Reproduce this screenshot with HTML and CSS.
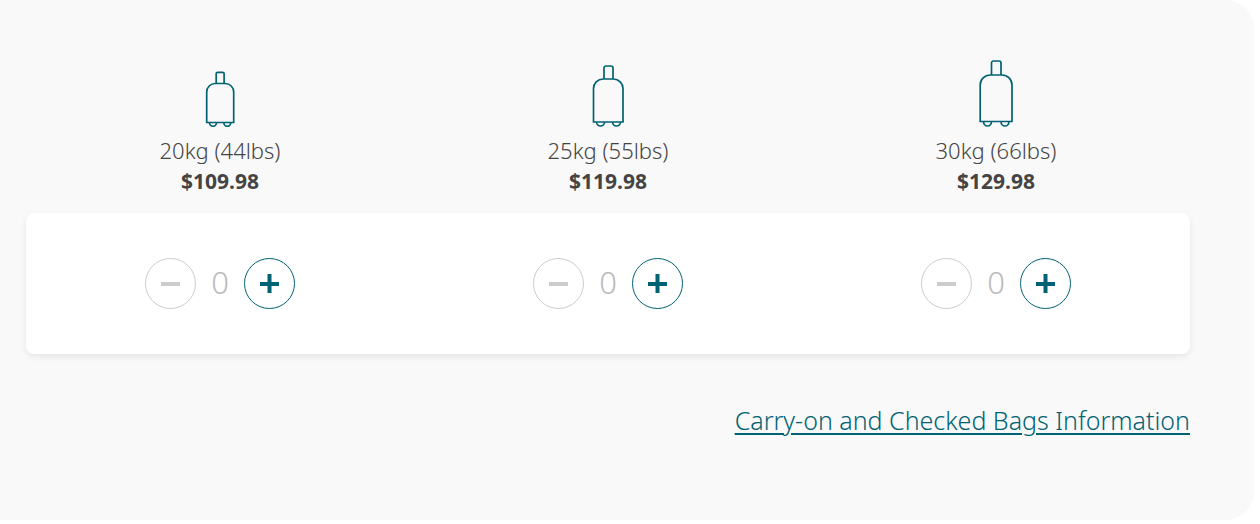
FILE: index.html
```html
<!DOCTYPE html>
<html lang="en">
<head>
    <meta charset="UTF-8">
    <meta name="viewport" content="width=device-width, initial-scale=1.0">
    <title>Checked Bags</title>
    <link rel="stylesheet" href="styles.css">
</head>
<body>

<main class="bags">
    <div class="options">
        <div class="option">
            <svg class="bag" width="30" height="56" viewBox="0 0 30 56" aria-hidden="true">
                <path d="M11.2 12.5V2.8a1.5 1.5 0 0 1 1.5-1.5h4.900a1.500 1.500 0 0 1 1.500 1.500v9.700M1.700 51.500V21a8.500 8.500 0 0 1 8.500-8.500h10a8.500 8.500 0 0 1 8.500 8.500v30.500z"/>
                <path d="M4.500 51.500a3.500 3.800 0 0 0 7 0M18.800 51.500a3.500 3.800 0 0 0 7 0"/>
            </svg>
            <span id="bag20" class="weight">20kg (44lbs)</span>
            <strong class="price">$109.98</strong>
        </div>
        <div class="option">
            <svg class="bag" width="32" height="62" viewBox="0 0 32 62" aria-hidden="true">
                <path d="M12 14V3a2 2 0 0 1 2-2h5a2 2 0 0 1 2 2v11M1.500 57V23.500a9.500 9.500 0 0 1 9.500-9.500h10.500a9.500 9.500 0 0 1 9.500 9.500V57z"/>
                <path d="M4.500 57a4 4 0 0 0 8 0M20.500 57a4 4 0 0 0 8 0"/>
            </svg>
            <span id="bag25" class="weight">25kg (55lbs)</span>
            <strong class="price">$119.98</strong>
        </div>
        <div class="option">
            <svg class="bag" width="34" height="67" viewBox="0 0 34 67" aria-hidden="true">
                <path d="M12.500 15V3a2 2 0 0 1 2-2h5.500a2 2 0 0 1 2 2v12M1.200 61.500V25a10 10 0 0 1 10-10h11.800a10 10 0 0 1 10 10v36.500z"/>
                <path d="M4.500 61.500a4 4.500 0 0 0 8 0M22 61.500a4 4.500 0 0 0 8 0"/>
            </svg>
            <span id="bag30" class="weight">30kg (66lbs)</span>
            <strong class="price">$129.98</strong>
        </div>
    </div>

    <div class="card">
        <div class="counter" role="group" aria-labelledby="bag20">
            <button class="minus" aria-label="Remove bag" disabled><svg width="19" height="19" viewBox="0 0 19 19"><path d="M0 10H19"/></svg></button>
            <span class="count">0</span>
            <button class="plus" aria-label="Add bag"><svg width="19" height="19" viewBox="0 0 19 19"><path d="M0 10H19M9.500 0V19"/></svg></button>
        </div>
        <div class="counter" role="group" aria-labelledby="bag25">
            <button class="minus" aria-label="Remove bag" disabled><svg width="19" height="19" viewBox="0 0 19 19"><path d="M0 10H19"/></svg></button>
            <span class="count">0</span>
            <button class="plus" aria-label="Add bag"><svg width="19" height="19" viewBox="0 0 19 19"><path d="M0 10H19M9.500 0V19"/></svg></button>
        </div>
        <div class="counter" role="group" aria-labelledby="bag30">
            <button class="minus" aria-label="Remove bag" disabled><svg width="19" height="19" viewBox="0 0 19 19"><path d="M0 10H19"/></svg></button>
            <span class="count">0</span>
            <button class="plus" aria-label="Add bag"><svg width="19" height="19" viewBox="0 0 19 19"><path d="M0 10H19M9.500 0V19"/></svg></button>
        </div>
    </div>

    <a href="#" class="info">Carry-on and Checked Bags Information</a>
</main>

<script>
    document.querySelectorAll('.counter').forEach(function (counter) {
        const minus = counter.querySelector('.minus');
        const plus = counter.querySelector('.plus');
        const count = counter.querySelector('.count');

        function change(amount) {
            const value = Number(count.textContent) + amount;
            count.textContent = value;
            minus.disabled = value === 0;
        }

        minus.addEventListener('click', function () { change(-1); });
        plus.addEventListener('click', function () { change(1); });
    });
</script>

</body>
</html>
```
FILE: styles.css
```css
* {
    box-sizing: border-box;
}
body {
    margin: 0;
    background-color: #fff;
    color: #444;
    font-family: "Noto Sans", "Open Sans", sans-serif;
}
.bags {
    display: flex;
    flex-direction: column;
    margin-right: 6px;
    padding: 60px 64px 81px 26px;
    background-color: #f9f9f9;
    border-radius: 0 28px 28px 0;
}
.options,
.card {
    display: grid;
    grid-template-columns: repeat(3, 1fr);
}
.options {
    align-items: end;
}
.option {
    display: flex;
    flex-direction: column;
    align-items: center;
    padding-bottom: 16px;
    font-size: 22px;
    line-height: 31px;
}
.bag {
    margin-bottom: 8px;
    fill: none;
    stroke: #006272;
    stroke-width: 1.7;
}
.weight {
    font-weight: 300;
}
.price {
    font-size: 21px;
    font-weight: 700;
}
.card {
    padding: 45px 0;
    background-color: #fff;
    border-radius: 8px;
    box-shadow: 0 3px 6px rgba(0, 0, 0, 0.08);
}
.counter {
    display: flex;
    justify-content: center;
    align-items: center;
}
.counter button {
    display: flex;
    justify-content: center;
    align-items: center;
    width: 51px;
    height: 51px;
    padding: 0;
    border: 1px solid #006272;
    border-radius: 50%;
    background-color: #fff;
    color: #006272;
    cursor: pointer;
}
.counter button:disabled {
    border-color: #ccc;
    color: #ccc;
    cursor: default;
}
.counter svg {
    fill: none;
    stroke: currentColor;
    stroke-width: 4;
}
.count {
    width: 48px;
    padding-bottom: 4px;
    color: #bbb;
    font-size: 31px;
    font-weight: 300;
    line-height: 44px;
    text-align: center;
}
.info {
    align-self: flex-end;
    margin-top: 48px;
    color: #006272;
    font-size: 25px;
    font-weight: 300;
    line-height: 37px;
    text-decoration-thickness: 2px;
    text-underline-offset: 3px;
}
```
